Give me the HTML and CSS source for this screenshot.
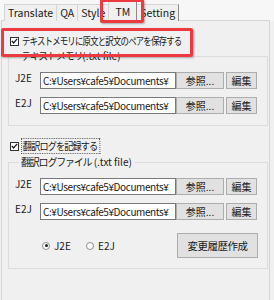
FILE: index.html
```html
<!DOCTYPE html>
<html lang="ja">
<head>
    <meta charset="UTF-8">
    <title>TM Settings</title>
    <link rel="stylesheet" href="styles.css">
</head>
<body>
    <div class="window">
        <!-- Tabs -->
        <div class="tabs">
            <span class="tab">Translate</span>
            <span class="tab">QA</span>
            <span class="tab">Style</span>
            <span class="tab active">TM</span>
            <span class="tab">Setting</span>
        </div>

        <!-- Tab page -->
        <div class="panel">
            <label class="check-row">
                <span class="checkbox">
                    <svg width="8" height="8" viewBox="0 0 8 8"><path d="M1 4 L3 6.2 L7 1.5" fill="none" stroke="#222" stroke-width="1.5"/></svg>
                </span>
                <span class="jp label-tm">テキストメモリに原文と訳文のペアを保存する</span>
            </label>

            <fieldset class="group group-tm">
                <legend><span class="jp">テキストメモリ</span>(.txt file)</legend>
                <div class="file-row">
                    <span class="row-label">J2E</span>
                    <div class="path">C:¥Users¥cafe5¥Documents¥</div>
                    <button class="btn btn-browse">参照...</button>
                    <button class="btn btn-edit">編集</button>
                </div>
                <div class="file-row">
                    <span class="row-label">E2J</span>
                    <div class="path">C:¥Users¥cafe5¥Documents¥</div>
                    <button class="btn btn-browse">参照...</button>
                    <button class="btn btn-edit">編集</button>
                </div>
            </fieldset>

            <label class="check-row second">
                <span class="checkbox">
                    <svg width="8" height="8" viewBox="0 0 8 8"><path d="M1 4 L3 6.2 L7 1.5" fill="none" stroke="#222" stroke-width="1.5"/></svg>
                </span>
                <span class="jp label-log focus">翻訳ログを記録する</span>
            </label>

            <fieldset class="group group-log">
                <legend><span class="jp">翻訳ログファイル</span> (.txt file)</legend>
                <div class="file-row">
                    <span class="row-label">J2E</span>
                    <div class="path">C:¥Users¥cafe5¥Documents¥</div>
                    <button class="btn btn-browse">参照...</button>
                    <button class="btn btn-edit">編集</button>
                </div>
                <div class="file-row">
                    <span class="row-label">E2J</span>
                    <div class="path">C:¥Users¥cafe5¥Documents¥</div>
                    <button class="btn btn-browse">参照...</button>
                    <button class="btn btn-edit">編集</button>
                </div>
                <div class="action-row">
                    <div class="radios">
                        <span class="radio checked"></span><span class="radio-text">J2E</span>
                        <span class="radio"></span><span class="radio-text">E2J</span>
                    </div>
                    <button class="btn btn-history"><span class="jp">変更履歴作成</span></button>
                </div>
            </fieldset>
        </div>

        <!-- Red annotation boxes -->
        <div class="mark mark-tab"></div>
        <div class="mark mark-check"></div>
    </div>
</body>
</html>
```

FILE: styles.css
```css
:root {
    --bg: #f0f0f0;
    --line: #d5d5d5;
    --group-line: #dcdcdc;
    --text: #1a1a1a;
    --btn-bg: #e1e1e1;
    --btn-border: #adadad;
    --mark: #ec3a40;
}

* {
    margin: 0;
    padding: 0;
    box-sizing: border-box;
}

body {
    background-color: var(--bg);
    color: var(--text);
    font-family: "Noto Sans CJK JP", sans-serif;
    font-size: 11px;
    line-height: 14px;
}

.window {
    position: relative;
    width: 274px;
    height: 300px;
    overflow: hidden;
}

.jp {
    font-size: 10.5px;
    letter-spacing: -0.5px;
}

/* Meiryo UI kana are narrower than Noto's, squeeze the long labels */
.label-tm,
.label-log {
    display: inline-block;
    letter-spacing: -1px;
    transform-origin: left center;
}

.label-tm {
    transform: scaleX(0.8);
}

.label-log {
    transform: scaleX(0.87);
}

/* Tabs */
.tabs {
    display: flex;
    align-items: flex-end;
    height: 21px;
    padding-left: 4px;
    background-color: #f7f7f7;
}

.tab {
    height: 17px;
    padding: 1px 3px 0;
    border: 1px solid var(--line);
    border-bottom: none;
    border-right-color: #8a8a8a;
    margin-right: -1px;
    background-color: #f0f0f0;
    font-size: 10.5px;
}

.tab.active {
    height: 20px;
    padding: 3px 6px 0;
    background-color: var(--bg);
    position: relative;
    z-index: 1;
}

/* Tab page */
.panel {
    margin: -1px 4px 0 1px;
    height: 290px;
    border: 1px solid var(--line);
    border-bottom: none;
    padding: 13px 1px 0 6px;
}

.check-row {
    display: flex;
    align-items: center;
    gap: 3px;
    height: 14px;
    padding-left: 2px;
    margin-bottom: 1px;
}

.check-row.second {
    margin-top: 13px;
    margin-bottom: 2px;
}

.checkbox {
    display: flex;
    align-items: center;
    justify-content: center;
    flex-shrink: 0;
    width: 9px;
    height: 9px;
    background-color: #fff;
    border: 1px solid #333;
}

.checkbox svg {
    display: block;
}

.focus {
    outline: 1px dotted #555;
    outline-offset: 0;
    padding: 0 2px 0 1px;
}

/* Group boxes */
.group {
    border: 1px solid var(--group-line);
    padding: 0 9px 11px 6px;
    min-width: 0;
}

.group-log {
    padding-bottom: 10px;
}

.group legend {
    line-height: 14px;
    padding: 0 3px;
    margin-left: 3px;
    font-size: 10px;
}

.group legend .jp {
    font-size: 10px;
    letter-spacing: -1.2px;
}

.file-row {
    display: flex;
    align-items: flex-start;
    height: 17px;
    margin-top: 8px;
}

.group legend + .file-row {
    margin-top: 9px;
}

.row-label {
    width: 25px;
    line-height: 12px;
    font-size: 10px;
}

.path {
    width: 136px;
    height: 17px;
    padding: 1px 0 0 2px;
    background-color: #fff;
    border: 1px solid #7a7a7a;
    white-space: nowrap;
    overflow: hidden;
    font-size: 10px;
    letter-spacing: -0.4px;
    line-height: 14px;
}

.btn {
    height: 17px;
    background-color: var(--btn-bg);
    border: 1px solid var(--btn-border);
    font-family: inherit;
    font-size: 10px;
    line-height: 14px;
    color: var(--text);
}

.btn-browse {
    width: 48px;
}

.btn-edit {
    width: 31px;
    margin-left: 2px;
}

.action-row {
    display: flex;
    align-items: center;
    justify-content: space-between;
    margin-top: 13px;
}

.radios {
    display: flex;
    align-items: center;
    padding-left: 27px;
}

.radio {
    width: 8px;
    height: 8px;
    border: 1px solid #8c8c8c;
    border-radius: 50%;
    background-color: #fff;
    margin-right: 1px;
    position: relative;
}

.radio.checked::after {
    content: "";
    position: absolute;
    left: 1.5px;
    top: 1.5px;
    width: 3px;
    height: 3px;
    border-radius: 50%;
    background-color: #222;
}

.radio-text {
    width: 35px;
    padding-left: 3px;
    font-size: 10px;
}

.btn-history {
    width: 81px;
    height: 25px;
}

/* Red annotations */
.mark {
    position: absolute;
    border: 3px solid var(--mark);
    border-radius: 2px;
    box-shadow: 1px 1px 2px rgba(0, 0, 0, 0.3);
    z-index: 5;
}

.mark-tab {
    left: 100px;
    top: -1px;
    width: 44px;
    height: 24px;
}

.mark-check {
    left: 1px;
    top: 28px;
    width: 192px;
    height: 29px;
}
```
